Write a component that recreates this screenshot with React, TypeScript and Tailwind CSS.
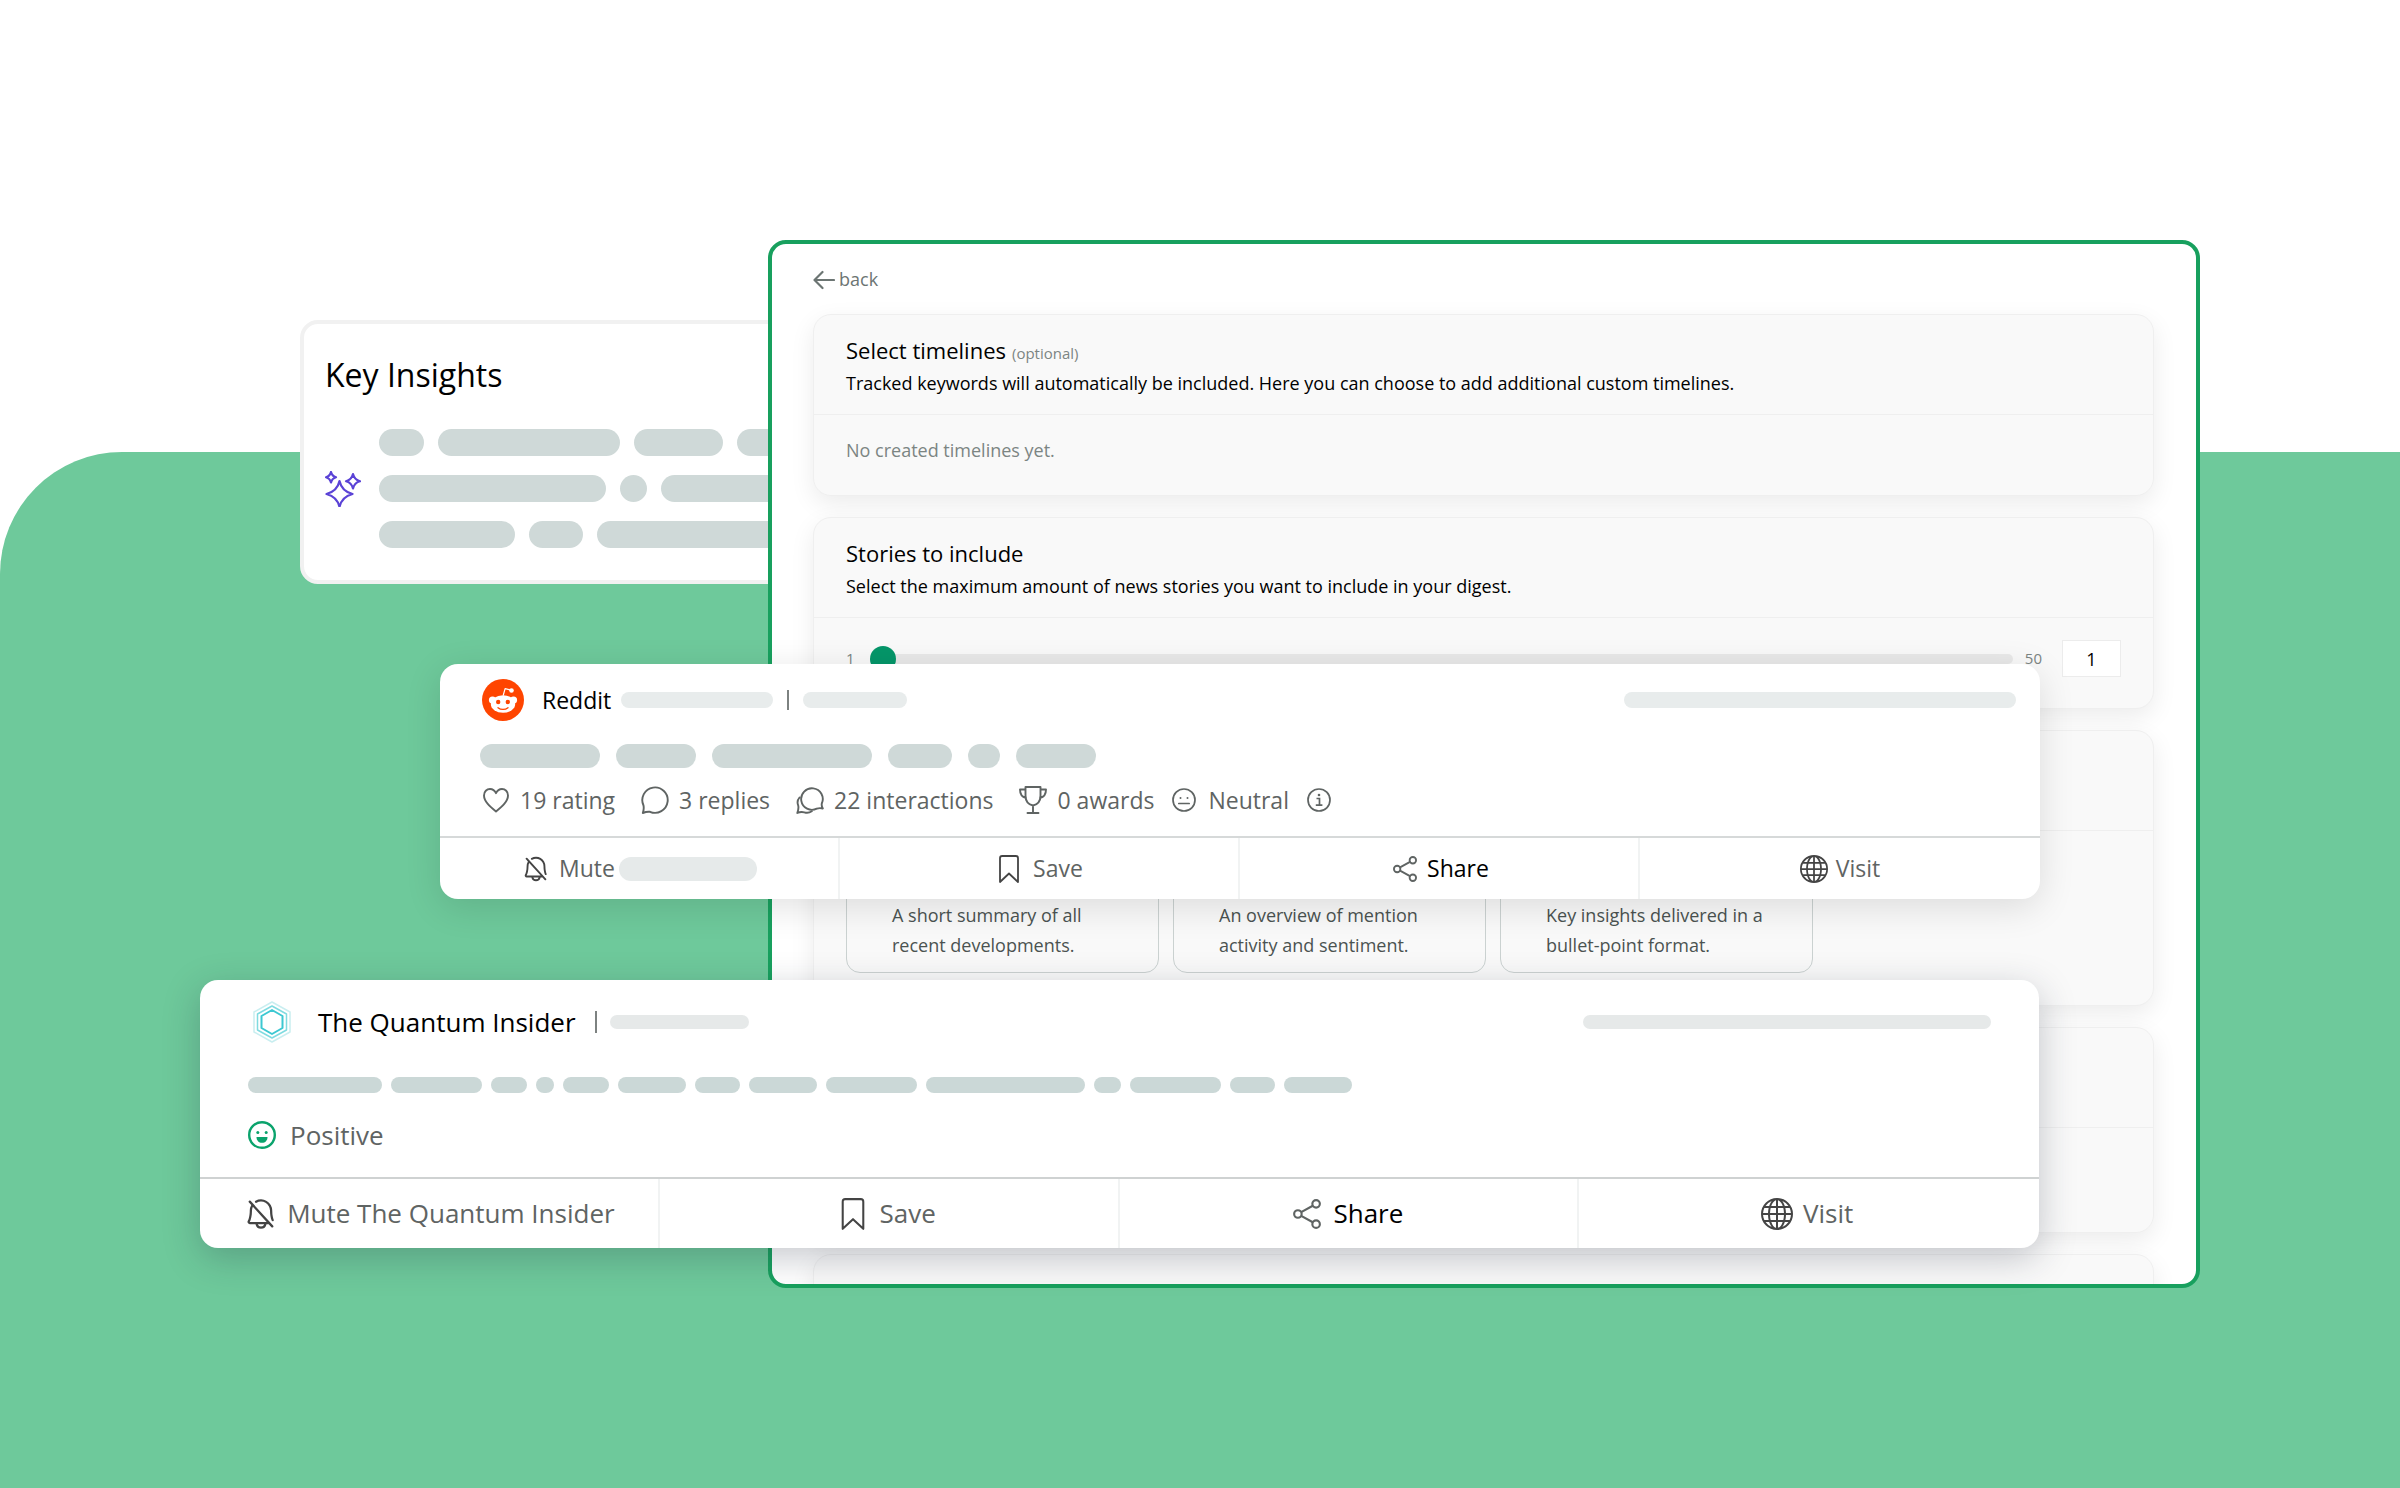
import { useState } from "react"
import type { ReactNode } from "react"
import { BsGlobe } from "react-icons/bs"
import { PiBellSlash } from "react-icons/pi"

function Pill({ width, className }: { width: number; className: string }) {
  return <span className={`block shrink-0 rounded-full ${className}`} style={{ width }} />
}

function ArrowLeftIcon() {
  return (
    <svg className="h-5 w-[22px]" viewBox="0 0 22 20" fill="none" stroke="currentColor" strokeWidth="2.200" strokeLinecap="round" strokeLinejoin="round">
      <path d="M21 10H1.500M9.500 2 1.500 10l8 8" />
    </svg>
  )
}

function SparklesIcon() {
  return (
    <svg className="h-9 w-9 shrink-0 text-[#5b43d6]" viewBox="0 0 36 36" fill="none" stroke="currentColor" strokeWidth="2.200" strokeLinejoin="round">
      <path d="M14.500 10c1.500 7 5.500 11 13 13-7.500 2-11.500 6-13 13-1.500-7-5.500-11-13-13 7.500-2 11.500-6 13-13Z" />
      <path d="M6 1c.7 3 2.200 4.500 5 5.200C8.200 7 6.700 8.500 6 11.500 5.300 8.500 3.800 7 1 6.200 3.800 5.500 5.300 4 6 1Z" />
      <path d="M28 3c1 4 3 6.200 7 7.200-4 1-6 3.300-7 7.300-1-4-3-6.300-7-7.300 4-1 6-3.200 7-7.200Z" />
    </svg>
  )
}

function HeartIcon() {
  return (
    <svg className="h-7 w-7" viewBox="0 0 28 28" fill="none" stroke="currentColor" strokeWidth="1.900" strokeLinejoin="round">
      <path d="M14 25.500C8 20.500 2 15.500 2 9.500 2 5.500 4.800 3 8 3c2.700 0 4.800 1.600 6 4.200C15.200 4.600 17.300 3 20 3c3.200 0 6 2.500 6 6.500 0 6-6 11-12 16Z" />
    </svg>
  )
}

function ChatIcon() {
  return (
    <svg className="h-7 w-7" viewBox="0 0 28 28" fill="none" stroke="currentColor" strokeWidth="1.900" strokeLinejoin="round">
      <path d="M1.800 27c.9-2.500 1.200-5 .7-7.500A12.700 12.700 0 1 1 9 25.800c-2.200-.4-4.700.2-7.200 1.200Z" />
    </svg>
  )
}

function ChatsIcon() {
  return (
    <svg className="h-7 w-7" viewBox="0 0 28 28" fill="none" stroke="currentColor" strokeWidth="1.900" strokeLinejoin="round" strokeLinecap="round">
      <path d="M26.800 22.500c-2.200-.6-4-.6-6 .2a10.800 10.800 0 1 1 5-5.200c-.4 1.700.1 3.300 1 5Z" />
      <path d="M3.500 11.500c-2 2.300-2.400 5.200-1.300 8 .5 2 .2 4.500-.9 7.500 2.500-1.200 4.800-1.300 7-.7 2.500.8 5.200.5 7.500-1" />
    </svg>
  )
}

function TrophyIcon() {
  return (
    <svg className="h-7 w-7" viewBox="0 0 28 28" fill="none" stroke="currentColor" strokeWidth="1.900" strokeLinejoin="round" strokeLinecap="round">
      <path d="M6.500 1h15v8.500c0 5.500-3 9-7.500 10-4.500-1-7.500-4.500-7.500-10V1ZM6.500 3.500H1c0 4.500 2 7.500 6 8.500M21.500 3.500H27c0 4.500-2 7.500-6 8.500M14 19.500V27M8.500 27h11" />
    </svg>
  )
}

function NeutralIcon() {
  return (
    <svg className="h-6 w-6" viewBox="0 0 24 24" fill="none" stroke="currentColor" strokeWidth="1.700" strokeLinecap="round">
      <circle cx="12" cy="12" r="11" />
      <path d="M6.800 15.500h10.400" />
      <circle cx="8.500" cy="10" r="1" fill="currentColor" stroke="none" />
      <circle cx="15.500" cy="10" r="1" fill="currentColor" stroke="none" />
    </svg>
  )
}

function InfoIcon() {
  return (
    <svg className="h-6 w-6" viewBox="0 0 24 24" fill="none" stroke="currentColor" strokeWidth="1.700">
      <circle cx="12" cy="12" r="11" />
      <path d="M9.500 10.500h3V17M8.800 17.200h6.600" />
      <circle cx="12" cy="7" r="1.300" fill="currentColor" stroke="none" />
    </svg>
  )
}

function PositiveIcon() {
  return (
    <svg className="h-7 w-7 text-[#0aa36c]" viewBox="0 0 28 28" fill="none" stroke="currentColor" strokeWidth="2.400">
      <circle cx="14" cy="14" r="12.800" />
      <path d="M8.500 16h11c0 3.500-2.200 5.800-5.500 5.800S8.500 19.500 8.500 16Z" fill="currentColor" stroke="none" />
      <circle cx="9.800" cy="11.500" r="1.500" fill="currentColor" stroke="none" />
      <circle cx="18.200" cy="11.500" r="1.500" fill="currentColor" stroke="none" />
    </svg>
  )
}

function BookmarkIcon({ className }: { className: string }) {
  return (
    <svg className={className} viewBox="0 0 20 28" fill="none" stroke="currentColor" strokeWidth="1.800" strokeLinejoin="round">
      <path d="M1 3.200C1 2 2 1 3.200 1h13.600C18 1 19 2 19 3.200V27l-9-8.500L1 27V3.200Z" />
    </svg>
  )
}

function ShareIcon({ className }: { className: string }) {
  return (
    <svg className={className} viewBox="0 0 26 28" fill="none" stroke="currentColor" strokeWidth="2">
      <circle cx="4.500" cy="14" r="3.500" />
      <circle cx="21.500" cy="4.500" r="3.500" />
      <circle cx="21.500" cy="23.500" r="3.500" />
      <path d="m7.600 12.300 10.800-6M7.600 15.700l10.800 6" />
    </svg>
  )
}

function RedditLogo() {
  return (
    <svg className="h-[42px] w-[42px]" viewBox="0 0 42 42">
      <circle cx="21" cy="21" r="21" fill="#ff4500" />
      <g fill="#fff">
        <circle cx="10.500" cy="21" r="3.600" />
        <circle cx="31.500" cy="21" r="3.600" />
        <ellipse cx="21" cy="25" rx="12.200" ry="8.800" />
        <circle cx="29.500" cy="11.500" r="2.300" />
      </g>
      <path d="m21.200 16.500 1.900-6.800 6 1.400" fill="none" stroke="#fff" strokeWidth="1.200" strokeLinejoin="round" />
      <circle cx="16.200" cy="23" r="2.200" fill="#ff4500" />
      <circle cx="25.800" cy="23" r="2.200" fill="#ff4500" />
      <path d="M16 28.700c2.800 2.300 7.200 2.300 10 0" fill="none" stroke="#ff4500" strokeWidth="1.300" strokeLinecap="round" />
    </svg>
  )
}

function QuantumLogo() {
  return (
    <svg className="h-[42px] w-10" viewBox="0 0 40 42" fill="none" strokeLinejoin="round">
      <path d="m20 1 18 10v20L20 41 2 31V11L20 1Z" stroke="#c9eef0" strokeWidth="1.500" />
      <path d="m20 5 14.500 8v16L20 37 5.500 29V13L20 5Z" stroke="#7fdbe0" strokeWidth="1.500" />
      <path d="m20 9 10.500 6v12L20 33 9.500 27V15L20 9Z" stroke="#3cc8d2" strokeWidth="2" />
    </svg>
  )
}

function Section({ title, note, description, children }: { title?: string; note?: string; description?: string; children?: ReactNode }) {
  return (
    <section className="rounded-[18px] border border-[#efefef] bg-[#f9f9f9] shadow-[0_8px_24px_rgba(0,0,0,0.08)]">
      <div className="min-h-[100px] border-b border-[#efefef] px-8 pt-[21px] pb-[17px]">
        {title && (
          <h2 className="text-[22px] leading-7">
            {title}
            {note && <span className="ml-[6px] text-[15px] leading-none text-[#7c8583]">{note}</span>}
          </h2>
        )}
        {description && <p className="mt-[5px] text-[18px] leading-7">{description}</p>}
      </div>
      {children}
    </section>
  )
}

const formats = [
  "A short summary of all recent developments.",
  "An overview of mention activity and sentiment.",
  "Key insights delivered in a bullet-point format.",
]

function DigestPanel() {
  const [count, setCount] = useState(1)

  return (
    <main className="relative mr-[200px] ml-[768px] flex h-[1048px] flex-col gap-[21px] overflow-hidden rounded-[18px] border-4 border-[#18a05e] bg-white pt-[22px] pr-[42px] pl-[41px]">
      <button type="button" className="flex h-7 items-center gap-1 self-start text-[18px] text-[#6c7573]">
        <ArrowLeftIcon />
        back
      </button>

      <Section
        title="Select timelines"
        note="(optional)"
        description="Tracked keywords will automatically be included. Here you can choose to add additional custom timelines."
      >
        <p className="px-8 pt-[21px] pb-[31px] text-[18px] leading-7 text-[#7c8583]">No created timelines yet.</p>
      </Section>

      <Section title="Stories to include" description="Select the maximum amount of news stories you want to include in your digest.">
        <div className="flex items-center px-8 pt-[22px] pb-[31px] text-[15px] text-[#7c8583]">
          <span className="w-6">1</span>
          <input
            type="range"
            aria-label="Stories to include"
            min={1}
            max={50}
            value={count}
            onChange={(e) => setCount(Number(e.target.value))}
            className="h-[10px] flex-1 appearance-none rounded-full bg-[#e9e9e9] [&::-webkit-slider-thumb]:h-[26px] [&::-webkit-slider-thumb]:w-[26px] [&::-webkit-slider-thumb]:appearance-none [&::-webkit-slider-thumb]:rounded-full [&::-webkit-slider-thumb]:bg-[#059669]"
          />
          <span className="ml-3">50</span>
          <input
            type="text"
            inputMode="numeric"
            aria-label="Number of stories"
            value={count}
            onChange={(e) => setCount(Number(e.target.value) || 1)}
            className="ml-5 h-[37px] w-[59px] border border-[#ececec] bg-white text-center text-[18px] text-black"
          />
        </div>
      </Section>

      <Section>
        <div className="flex gap-[14px] px-8 pt-[22px] pb-8">
          {formats.map((text) => (
            <button key={text} type="button" className="flex h-[120px] w-[313px] items-end rounded-[14px] border border-[#cbd2d1] pr-8 pb-3 pl-[45px] text-left text-[18px] leading-[30px] text-[#4b5351]">
              {text}
            </button>
          ))}
        </div>
      </Section>

      <Section>
        <div className="h-[104px]" />
      </Section>

      <Section />
    </main>
  )
}

const insightRows = [
  [45, 182, 89, 120],
  [227, 27, 180],
  [136, 54, 240],
]

function KeyInsights() {
  return (
    <aside className="absolute top-[320px] left-[300px] h-[264px] w-[500px] overflow-hidden rounded-[18px] border-4 border-[#f1f1f1] bg-white pt-7 pl-[21px]">
      <h2 className="text-[32px] leading-[46px]">Key Insights</h2>
      <div className="mt-[31px] flex items-center gap-[18px]">
        <SparklesIcon />
        <div className="flex flex-col gap-[19px]">
          {insightRows.map((row, i) => (
            <div key={i} className="flex gap-[14px]">
              {row.map((w, j) => (
                <Pill key={j} width={w} className="h-[27px] bg-[#cfd9d8]" />
              ))}
            </div>
          ))}
        </div>
      </div>
    </aside>
  )
}

const action = "flex items-center justify-center"

function RedditCard() {
  return (
    <article className="absolute top-[664px] right-[360px] left-[440px] rounded-[18px] bg-white text-[23px] text-[#5f6463] shadow-[0_8px_36px_rgba(0,0,0,0.12)]">
      <div className="px-10 pt-[15px] pb-5">
        <header className="flex items-center pl-[2px]">
          <RedditLogo />
          <h3 className="ml-[18px] font-medium text-black">Reddit</h3>
          <Pill width={152} className="ml-[10px] h-4 bg-[#e8ecec]" />
          <span className="mx-[14px] h-5 w-[2px] bg-[#7d8281]" />
          <Pill width={104} className="h-4 bg-[#e8ecec]" />
          <Pill width={392} className="-mr-4 ml-auto h-4 bg-[#e8ecec]" />
        </header>
        <div className="mt-[23px] flex gap-4">
          {[120, 80, 160, 64, 32, 80].map((w, i) => (
            <Pill key={i} width={w} className="h-6 bg-[#cfd9d8]" />
          ))}
        </div>
        <div className="mt-4 flex h-8 items-center pl-[2px]">
          <span className="flex items-center gap-[10px]"><HeartIcon />19 rating</span>
          <span className="ml-[26px] flex items-center gap-[10px]"><ChatIcon />3 replies</span>
          <span className="ml-[26px] flex items-center gap-[10px]"><ChatsIcon />22 interactions</span>
          <span className="ml-[26px] flex items-center gap-[10px]"><TrophyIcon />0 awards</span>
          <span className="ml-[18px] flex items-center gap-3"><NeutralIcon />Neutral</span>
          <span className="ml-[18px]"><InfoIcon /></span>
        </div>
      </div>
      <footer className="grid h-[63px] grid-cols-4 divide-x-2 divide-[#f1f3f3] border-t-2 border-[#d6d9d9]">
        <button type="button" className={`${action} gap-2`}>
          <PiBellSlash className="h-[30px] w-[30px] text-[#444]" />
          Mute
          <Pill width={138} className="-ml-1 h-6 bg-[#e6eaea]" />
        </button>
        <button type="button" className={`${action} gap-[14px] pl-1`}>
          <BookmarkIcon className="h-7 w-5 text-[#444]" />
          Save
        </button>
        <button type="button" className={`${action} gap-[10px] pl-1`}>
          <ShareIcon className="h-[26px] w-6" />
          <span className="font-medium text-black">Share</span>
        </button>
        <a href="#visit" className={`${action} gap-2`}>
          <BsGlobe className="h-7 w-7 text-[#444]" />
          Visit
        </a>
      </footer>
    </article>
  )
}

function QuantumCard() {
  return (
    <article className="absolute top-[980px] right-[361px] left-[200px] rounded-[18px] bg-white text-[26px] text-[#5f6463] shadow-[0_10px_36px_rgba(30,40,60,0.25)]">
      <div className="px-12 pt-[21px] pb-6">
        <header className="flex h-[42px] items-center pl-1">
          <QuantumLogo />
          <h3 className="ml-[26px] font-medium text-black">The Quantum Insider</h3>
          <span className="mr-[13px] ml-[19px] h-[22px] w-[2px] bg-[#7d8281]" />
          <Pill width={139} className="h-[14px] bg-[#e6e9e9]" />
          <Pill width={408} className="ml-auto h-[14px] bg-[#e6e9e9]" />
        </header>
        <div className="mt-[34px] flex gap-[9px]">
          {[134, 91, 36, 18, 46, 68, 45, 68, 91, 159, 27, 91, 45, 68].map((w, i) => (
            <Pill key={i} width={w} className="h-4 bg-[#cbd8d7]" />
          ))}
        </div>
        <div className="mt-6 flex h-9 items-center gap-[14px]">
          <PositiveIcon />
          Positive
        </div>
      </div>
      <footer className="grid h-[71px] grid-cols-4 divide-x-2 divide-[#f1f3f3] border-t-2 border-[#cfd2d2]">
        <button type="button" className={`${action} gap-2`}>
          <PiBellSlash className="h-9 w-9 text-[#444]" />
          Mute The Quantum Insider
        </button>
        <button type="button" className={`${action} gap-[14px]`}>
          <BookmarkIcon className="h-8 w-6 text-[#444]" />
          Save
        </button>
        <button type="button" className={`${action} gap-3`}>
          <ShareIcon className="h-[30px] w-7" />
          <span className="font-medium text-black">Share</span>
        </button>
        <a href="#visit" className={`${action} gap-[10px] pr-1`}>
          <BsGlobe className="h-8 w-8 text-[#444]" />
          Visit
        </a>
      </footer>
    </article>
  )
}

export default function App() {
  return (
    <div className="relative min-h-screen overflow-hidden bg-white pt-[240px] font-['Open_Sans',sans-serif] text-black">
      {/* Green backdrop */}
      <div className="absolute inset-x-0 top-[452px] bottom-0 rounded-tl-[122px] bg-[#6ec99b]" />
      <KeyInsights />
      <DigestPanel />
      <RedditCard />
      <QuantumCard />
    </div>
  )
}
